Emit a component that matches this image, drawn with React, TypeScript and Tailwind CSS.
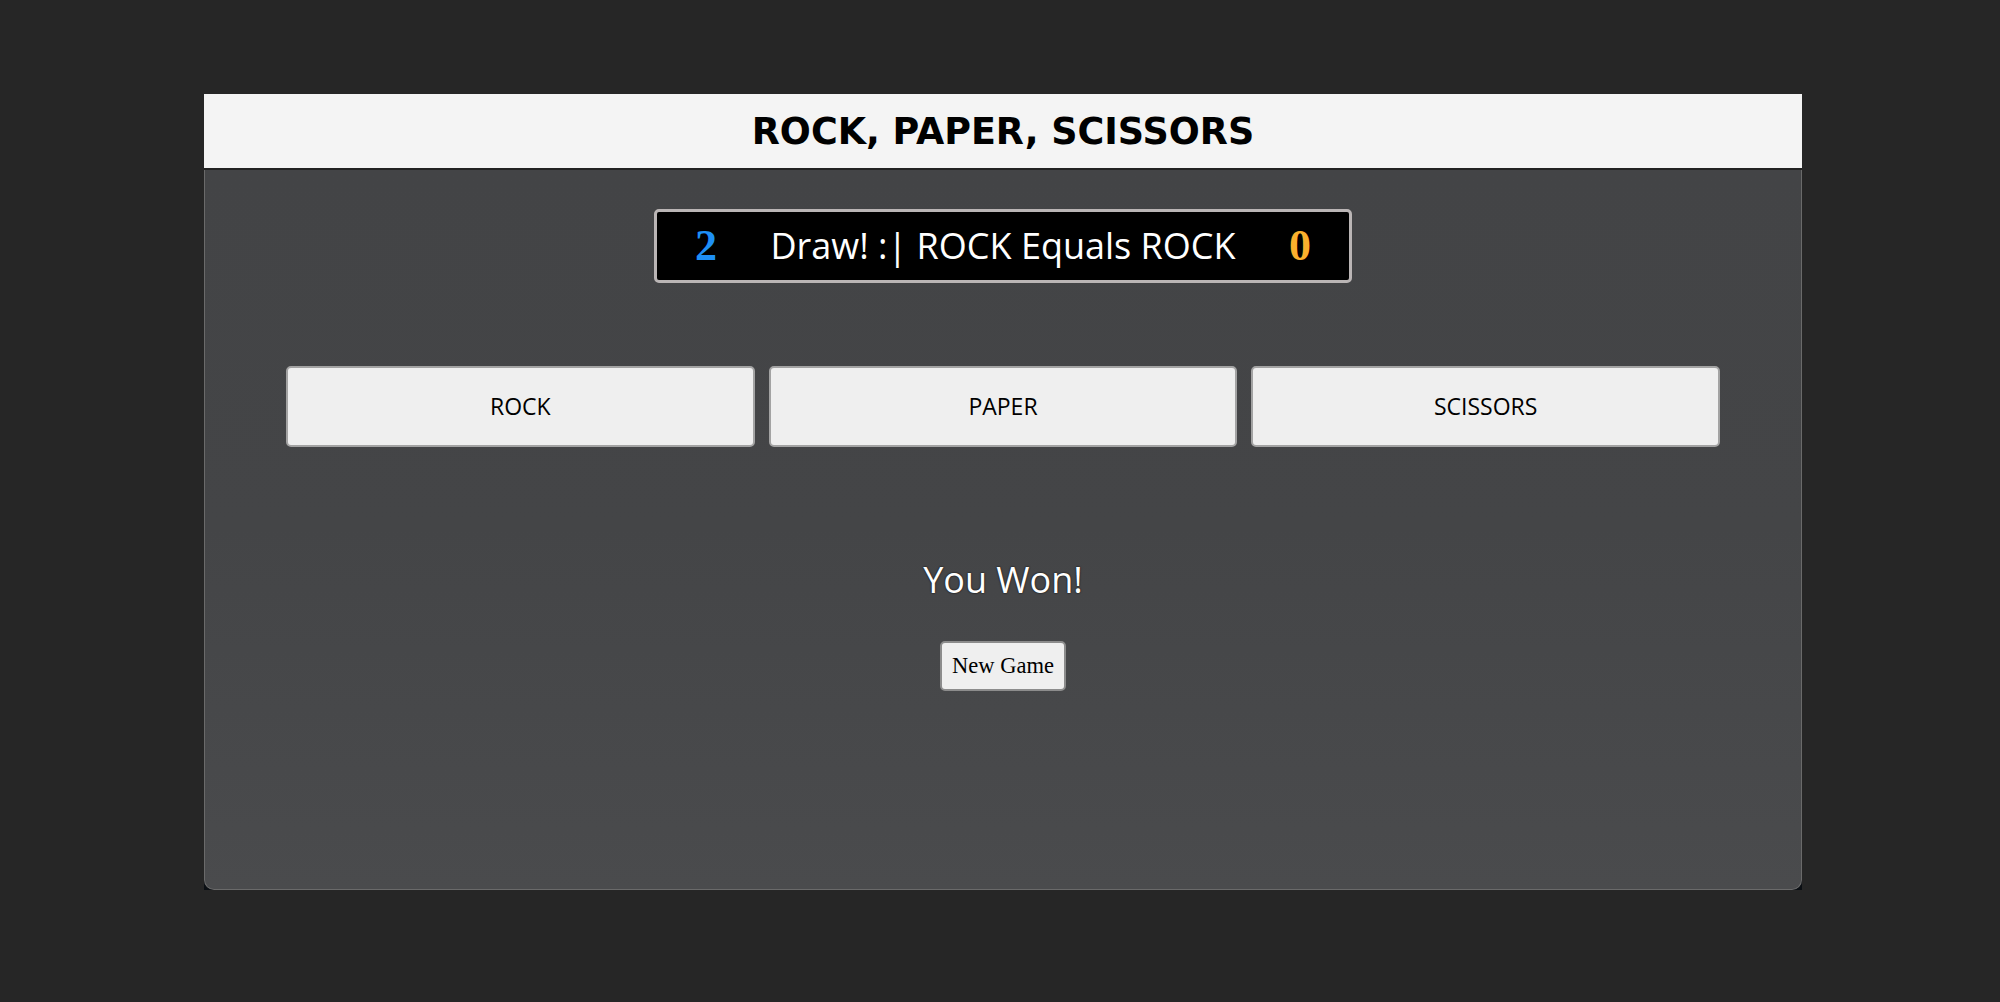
const sans = "font-['Open_Sans',sans-serif]";

const MoveButton = ({ label }: { label: string }) => (
  <button
    className={`h-[81px] rounded-[5px] border-2 border-[#a3a3a3] bg-[#efefef] text-[23px] text-black ${sans}`}
  >
    {label}
  </button>
);

export default function App() {
  return (
    <div className="min-h-[1002px] w-full bg-[#262626] pt-[94px]">
      <div className="ml-[204px] w-[1598px] bg-[#0b0f14]">
        {/* header */}
        <div className="flex h-[76px] items-center justify-center border-b-2 border-[#222] bg-[#f4f4f4] pt-[2px]">
          <h1 className="font-['DejaVu_Sans',sans-serif] text-[36.5px] font-bold leading-none text-black">
            ROCK, PAPER, SCISSORS
          </h1>
        </div>

        {/* board */}
        <div className="flex h-[720px] flex-col items-center rounded-b-[10px] border border-t-0 border-[#6a6a6a] bg-gradient-to-b from-[#434446] via-[#444547] to-[#4a4b4d]">
          <div className="mt-[39px] flex h-[74px] w-[698px] items-center rounded-[5px] border-[3px] border-[#bab5b5] bg-black px-[38px]">
            <span className="font-['Liberation_Serif',serif] text-[44px] font-bold leading-none text-[#1e8ff5]">2</span>
            <span className={`flex-1 text-center text-[36px] font-medium leading-none text-white ${sans}`}>
              Draw! :| ROCK Equals ROCK
            </span>
            <span className="font-['Liberation_Serif',serif] text-[44px] font-bold leading-none text-[#fbb02d]">0</span>
          </div>

          <div className="mt-[83px] grid w-full grid-cols-3 gap-[14px] px-[81px]">
            <MoveButton label="ROCK" />
            <MoveButton label="PAPER" />
            <MoveButton label="SCISSORS" />
          </div>

          <p className={`mt-[115px] text-[36px] leading-none text-white ${sans} [text-shadow:0_0_2px_#000]`}>
            You Won!
          </p>

          <button className="mt-[43px] h-[50px] w-[126px] rounded-[5px] border-2 border-[#8c8c8c] bg-[#efefef] font-['Liberation_Serif',serif] text-[22.5px] text-black">
            New Game
          </button>
        </div>
      </div>
    </div>
  );
}
